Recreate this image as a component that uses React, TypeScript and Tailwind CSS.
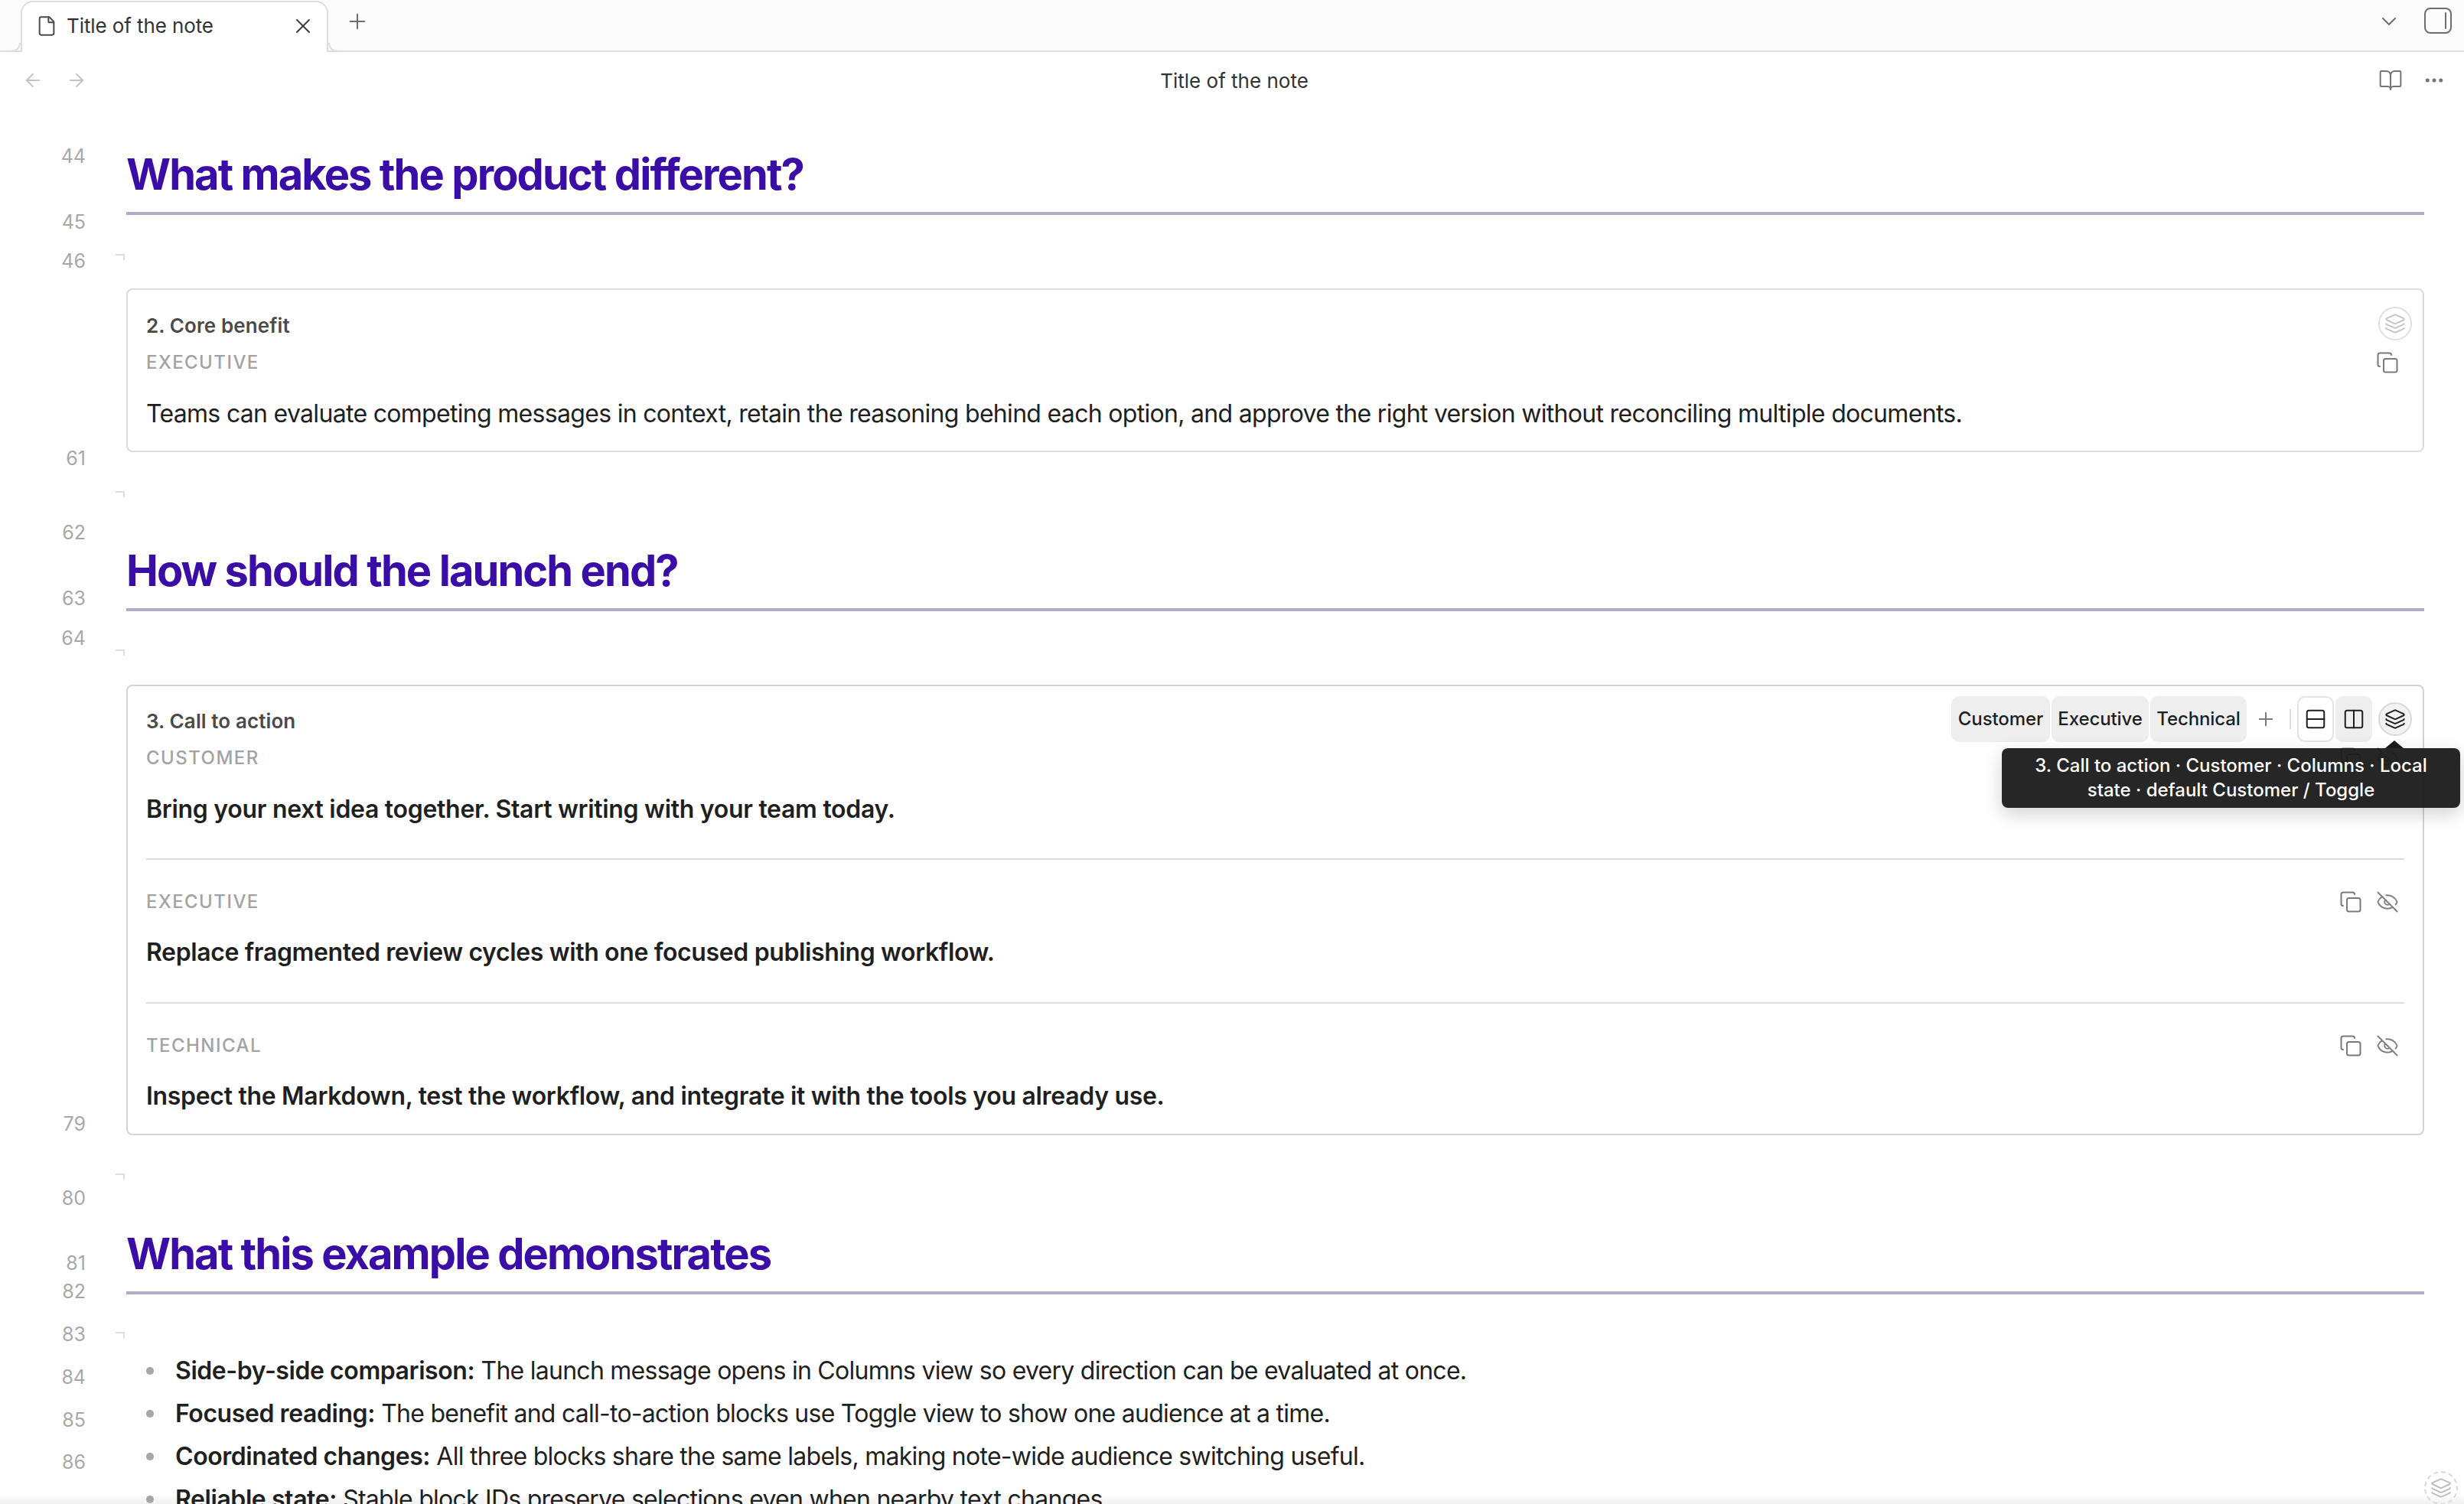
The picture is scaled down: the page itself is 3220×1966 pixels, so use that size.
import React from "react";
import { ArrowLeft, ArrowRight, BookOpen, ChevronDown, Columns2, Copy, Ellipsis, EyeOff, File, Layers, Plus, Rows2, X } from "lucide-react";

const Fold = ({ className }: { className: string }) => (
  <div className={"relative h-[8px] " + className}>
    <span className="absolute left-[-14px] top-0 h-[8px] w-[12px] border-t-2 border-r-2 border-[#dddddd]" />
  </div>
);

const Heading = ({ children, className }: { children: React.ReactNode; className: string }) => (
  <h2 className={"h-[87px] border-b-4 border-[#b2adc6] text-[56px] leading-[68px] font-bold tracking-[-1.93px] text-[#3a0ea6] " + className}>
    {children}
  </h2>
);

const Label = ({ children, eye, className }: { children: string; eye?: boolean; className: string }) => (
  <div className={"flex h-[30px] items-center justify-between pr-[7px] text-[24px] leading-[30px] font-medium tracking-[0.06em] text-[#a3a3a3] " + className}>
    <span>{children}</span>
    <span className="flex items-center gap-[18px] text-[#7a7a7a]">
      <Copy size={30} strokeWidth={2} absoluteStrokeWidth />
      {eye && <EyeOff size={30} strokeWidth={2} absoluteStrokeWidth className="text-[#808080]" />}
    </span>
  </div>
);

const Gutter = () => (
  <div className="w-[112px] shrink-0 text-right text-[25px] leading-[30px] text-[#a8a8a8]">
    <div className="mt-[47px]">44</div>
    <div className="mt-[56px]">45</div>
    <div className="mt-[21px]">46</div>
    <div className="mt-[228px]">61</div>
    <div className="mt-[67px]">62</div>
    <div className="mt-[56px]">63</div>
    <div className="mt-[22px]">64</div>
    <div className="mt-[605px]">79</div>
    <div className="mt-[67px]">80</div>
    <div className="mt-[55px]">81</div>
    <div className="mt-[7px]">82</div>
    <div className="mt-[26px]">83</div>
    <div className="mt-[26px]">84</div>
    <div className="mt-[26px]">85</div>
    <div className="mt-[25px]">86</div>
  </div>
);

const Bullet = ({ strong, text }: { strong: string; text: string }) => (
  <li className="flex h-[56px] items-center whitespace-nowrap pl-[26px] text-[32px] leading-[56px] tracking-[-0.74px] text-[#1f1f1f]">
    <span className="mr-[28px] h-[10px] w-[10px] shrink-0 rounded-full bg-[#a6a6a6]" />
    <span>
      <strong className="font-semibold tracking-[-0.43px]">{strong}</strong> {text}
    </span>
  </li>
);

export default function App() {
  return (
    <div className="relative flex h-[1966px] w-[3220px] flex-col overflow-hidden bg-white font-[Inter,sans-serif] text-[#1f1f1f]">
      {/* bottom fade */}
      <div className="absolute right-0 bottom-0 left-0 h-[14px] bg-gradient-to-b from-[#f6f6f6]/0 to-[#f1f1f1]" />
      {/* tab bar */}
      <div className="relative flex h-[68px] shrink-0 items-end border-b-2 border-[#dddddd] bg-[#fbfbfb] pl-[27px]">
        <div className="relative -mb-[2px] flex h-[67px] w-[402px] items-center rounded-t-[16px] border-x-2 border-t-2 border-[#dddddd] bg-white pr-[15px] pb-[4px] pl-[18px] text-[26px] tracking-[-0.1px] text-[#333333]">
          <span className="absolute bottom-0 left-[-14px] h-[12px] w-[12px] rounded-br-[12px] border-r-2 border-b-2 border-[#dddddd] bg-[#fbfbfb]" />
          <span className="absolute right-[-14px] bottom-0 h-[12px] w-[12px] rounded-bl-[12px] border-b-2 border-l-2 border-[#dddddd] bg-[#fbfbfb]" />
          <File size={28} strokeWidth={2} absoluteStrokeWidth className="shrink-0 text-[#4a4a4a]" />
          <span className="ml-[12px]">Title of the note</span>
          <X size={32} strokeWidth={2} absoluteStrokeWidth className="ml-auto text-[#3d3d3d]" />
        </div>
        <Plus size={32} strokeWidth={2} absoluteStrokeWidth className="mb-[22px] ml-[22px] text-[#6e6e6e]" />
        <ChevronDown size={32} strokeWidth={2} absoluteStrokeWidth className="mb-[22px] ml-auto text-[#6e6e6e]" />
        <svg width="36" height="34" viewBox="0 0 36 34" fill="none" className="mr-[16px] mb-[22px] ml-[30px] text-[#6e6e6e]">
          <rect x="1" y="1" width="34" height="32" rx="7" stroke="currentColor" strokeWidth="2" />
          <path d="M28 7V27" stroke="currentColor" strokeWidth="2" strokeLinecap="round" />
        </svg>
      </div>
      {/* navigation bar */}
      <div className="relative flex h-[74px] shrink-0 items-center pr-[24px] pl-[29px] text-[#c4c4c4]">
        <ArrowLeft size={28} strokeWidth={2} absoluteStrokeWidth />
        <ArrowRight size={28} strokeWidth={2} absoluteStrokeWidth className="ml-[29px]" />
        <span className="flex-1 pl-[4px] text-center text-[26px] text-[#333333]">Title of the note</span>
        <BookOpen size={32} strokeWidth={2} absoluteStrokeWidth className="text-[#757575]" />
        <Ellipsis size={30} strokeWidth={2.5} absoluteStrokeWidth className="ml-[26px] text-[#757575]" />
      </div>
      {/* editor */}
      <div className="relative flex min-h-0 flex-1">
        <Gutter />
        <div className="ml-[53px] w-[3003px] shrink-0">
          <Heading className="mt-[52px]">What makes the product different?</Heading>
          <Fold className="mt-[51px]" />
          <section className="relative mt-[37px] rounded-[8px] border-2 border-[#dcdcdc] px-[24px] pt-[31px] pb-[24px]">
            <span className="absolute top-[22px] right-[14px] flex h-[44px] w-[44px] items-center justify-center rounded-full border-2 border-[#e0e0e0] text-[#c6c6c6]">
              <Layers size={28} strokeWidth={2} absoluteStrokeWidth />
            </span>
            <div className="text-[26px] leading-[32px] font-semibold tracking-[0.1px] text-[#4a4a4a]">2. Core benefit</div>
            <Label className="mt-[17px]">EXECUTIVE</Label>
            <p className="mt-[27px] pt-[1px] text-[32px] leading-[48px] tracking-[-0.69px]">
              Teams can evaluate competing messages in context, retain the reasoning behind each option, and approve the right version without reconciling multiple documents.
            </p>
          </section>
          <Fold className="mt-[51px]" />
          <Heading className="mt-[62px]">How should the launch end?</Heading>
          <Fold className="mt-[50px]" />
          <section className="relative mt-[38px] rounded-[8px] border-2 border-[#d4d4d4] px-[24px] pt-[30px] pb-[25px]">
            <div className="absolute top-[13px] right-[14px] flex h-[60px] items-center">
              <span className="flex h-[60px] w-[129px] items-center justify-center rounded-[10px] bg-[#eeeeee] text-[24px] font-medium tracking-[-0.1px]">Customer</span>
              <span className="ml-[2px] flex h-[60px] w-[127px] items-center justify-center rounded-[10px] bg-[#eeeeee] text-[24px] font-medium tracking-[-0.1px]">Executive</span>
              <span className="ml-[2px] flex h-[60px] w-[126px] items-center justify-center rounded-[10px] bg-[#eeeeee] text-[24px] font-medium tracking-[-0.1px]">Technical</span>
              <Plus size={28} strokeWidth={2} absoluteStrokeWidth className="ml-[11px] text-[#7a7a7a]" />
              <span className="mr-[8px] ml-[17px] h-[26px] w-[2px] bg-[#dddddd]" />
              <span className="flex h-[60px] w-[48px] items-center justify-center rounded-[10px] border-2 border-[#e4e4e4] bg-white text-[#1f1f1f]">
                <Rows2 size={30} strokeWidth={2} absoluteStrokeWidth />
              </span>
              <span className="ml-[2px] flex h-[60px] w-[48px] items-center justify-center rounded-[10px] bg-[#eeeeee] text-[#1f1f1f]">
                <Columns2 size={30} strokeWidth={2} absoluteStrokeWidth />
              </span>
              <span className="ml-[8px] flex h-[44px] w-[44px] items-center justify-center rounded-full border-2 border-[#d8d8d8] bg-[#f2f2f2] text-[#1f1f1f]">
                <Layers size={28} strokeWidth={2} absoluteStrokeWidth />
              </span>
            </div>
            <div className="text-[26px] leading-[32px] font-semibold tracking-[0.1px] text-[#4a4a4a]">3. Call to action</div>
            <Label eye className="mt-[17px]">CUSTOMER</Label>
            <p className="mt-[28px] text-[32px] leading-[48px] font-semibold tracking-[-0.3px]">Bring your next idea together. Start writing with your team today.</p>
            <hr className="mt-[40px] border-t-2 border-[#dddddd]" />
            <Label eye className="mt-[40px]">EXECUTIVE</Label>
            <p className="mt-[27px] text-[32px] leading-[48px] font-semibold tracking-[-0.37px]">Replace fragmented review cycles with one focused publishing workflow.</p>
            <hr className="mt-[41px] border-t-2 border-[#dddddd]" />
            <Label eye className="mt-[40px]">TECHNICAL</Label>
            <p className="mt-[27px] text-[32px] leading-[48px] font-semibold tracking-[-0.31px]">Inspect the Markdown, test the workflow, and integrate it with the tools you already use.</p>
            {/* tooltip */}
            <div className="absolute top-[81px] right-[-49px] w-[599px] rounded-[8px] bg-[#1a1a1a]/95 px-[24px] py-[7px] text-center text-[24px] leading-[32px] font-medium text-white shadow-[0_8px_24px_rgba(0,0,0,0.18)]">
              <span className="absolute top-[-10px] right-[74px] h-0 w-0 border-x-[12px] border-b-[10px] border-x-transparent border-b-[#1a1a1a]" />
              3. Call to action · Customer · Columns · Local state · default Customer / Toggle
            </div>
          </section>
          <Fold className="mt-[50px]" />
          <Heading className="mt-[63px]">What this example demonstrates</Heading>
          <Fold className="mt-[49px]" />
          <ul className="mt-[15px]">
            <Bullet strong="Side-by-side comparison:" text="The launch message opens in Columns view so every direction can be evaluated at once." />
            <Bullet strong="Focused reading:" text="The benefit and call-to-action blocks use Toggle view to show one audience at a time." />
            <Bullet strong="Coordinated changes:" text="All three blocks share the same labels, making note-wide audience switching useful." />
            <Bullet strong="Reliable state:" text="Stable block IDs preserve selections even when nearby text changes." />
          </ul>
        </div>
      </div>
      <span className="absolute top-[1923px] left-[3168px] flex h-[44px] w-[44px] items-center justify-center rounded-full border-2 border-dashed border-[#d8d8d8] text-[#bdbdbd]">
        <Layers size={28} strokeWidth={2} absoluteStrokeWidth />
      </span>
    </div>
  );
}
